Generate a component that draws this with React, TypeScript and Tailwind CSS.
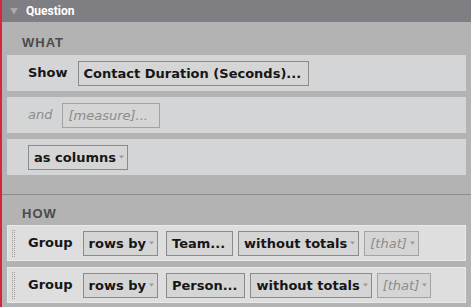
import type { ReactNode } from 'react'

const verdana = "font-['DejaVu_Sans',Verdana,sans-serif]"

function Arrow() {
  return (
    <svg width="5" height="4" viewBox="0 0 5 4" className="ml-[3px] shrink-0">
      <path d="M0 0.5h5L2.5 3.5z" fill="#999999" />
    </svg>
  )
}

interface BoxProps {
  children: ReactNode
  dropdown?: boolean
  muted?: boolean
  className?: string
}

function Box({ children, dropdown, muted, className = '' }: BoxProps) {
  return (
    <div
      className={`flex h-[25px] items-center border bg-[#d5d5d5] pl-[5px] text-[13px] leading-none ${
        dropdown ? 'pr-[3px]' : 'pr-[7px]'
      } ${muted ? 'border-[#a3a3a3] italic text-[#8c8c8c]' : 'border-[#8a8a8a] font-bold text-[#161616]'} ${className}`}
    >
      <span className="whitespace-nowrap">{children}</span>
      {dropdown && <Arrow />}
    </div>
  )
}

function Label({ children, muted }: { children: ReactNode; muted?: boolean }) {
  return (
    <span className={`mr-[10px] text-[13px] ${muted ? 'italic text-[#8c8c8c]' : 'font-bold text-[#161616]'}`}>
      {children}
    </span>
  )
}

function WhatRow({ children }: { children: ReactNode }) {
  return <div className="flex h-[36px] items-center bg-[#d4d5d6] pl-[21px]">{children}</div>
}

function Handle() {
  return (
    <div className="grid grid-cols-2 gap-x-[1px] gap-y-[1px]">
      {Array.from({ length: 28 }).map((_, i) => (
        <span key={i} className="h-[1px] w-[1px] bg-[#9d9d9d]" />
      ))}
    </div>
  )
}

function HowRow({ children }: { children: ReactNode }) {
  return (
    <div className="flex h-[36px] items-center border border-[#e9e9e9] bg-[#dedede] pl-[4px]">
      <Handle />
      <div className="ml-[13px] flex items-center">{children}</div>
    </div>
  )
}

function SectionTitle({ children }: { children: ReactNode }) {
  return (
    <div className="pl-[20px] font-['Liberation_Sans',Arial,sans-serif] text-[13px] font-bold leading-[15px] tracking-[1px] text-[#4b4b4b]">
      {children}
    </div>
  )
}

export default function App() {
  return (
    <div className={`flex h-[307px] w-[471px] overflow-hidden bg-[#b3b3b3] ${verdana}`}>
      <div className="w-[2px] shrink-0 bg-[#d8243c]" />
      <div className="flex flex-1 flex-col">
        <div className="flex h-[22px] items-center bg-[#7f7f83] pl-[8px]">
          <svg width="8" height="7" viewBox="0 0 8 7">
            <path d="M0 0h8L4 6.5z" fill="#a9a9ab" />
          </svg>
          <span className="ml-[8px] font-['Roboto',Arial,sans-serif] text-[12px] font-bold text-white">Question</span>
        </div>

        <div className="flex flex-col pt-[13px] pb-[19px]">
          <SectionTitle>WHAT</SectionTitle>
          <div className="mx-[5px] mt-[5px] flex flex-col gap-[6px]">
            <WhatRow>
              <Label>Show</Label>
              <Box>Contact Duration (Seconds)...</Box>
            </WhatRow>
            <WhatRow>
              <Label muted>and</Label>
              <Box muted className="pr-[11px]">[measure]...</Box>
            </WhatRow>
            <WhatRow>
              <Box dropdown>as columns</Box>
            </WhatRow>
          </div>
        </div>

        <div className="flex flex-1 flex-col border-t border-[#8c8c8c] pt-[11px]">
          <SectionTitle>HOW</SectionTitle>
          <div className="mx-[5px] mt-[4px] flex flex-col gap-[6px]">
            <HowRow>
              <Label>Group</Label>
              <div className="flex gap-[5px]">
                <Box dropdown className="mr-[3px]">rows by</Box>
                <Box>Team...</Box>
                <Box dropdown>without totals</Box>
                <Box dropdown muted>[that]</Box>
              </div>
            </HowRow>
            <HowRow>
              <Label>Group</Label>
              <div className="flex gap-[5px]">
                <Box dropdown className="mr-[3px]">rows by</Box>
                <Box>Person...</Box>
                <Box dropdown>without totals</Box>
                <Box dropdown muted>[that]</Box>
              </div>
            </HowRow>
          </div>
        </div>
      </div>
    </div>
  )
}
